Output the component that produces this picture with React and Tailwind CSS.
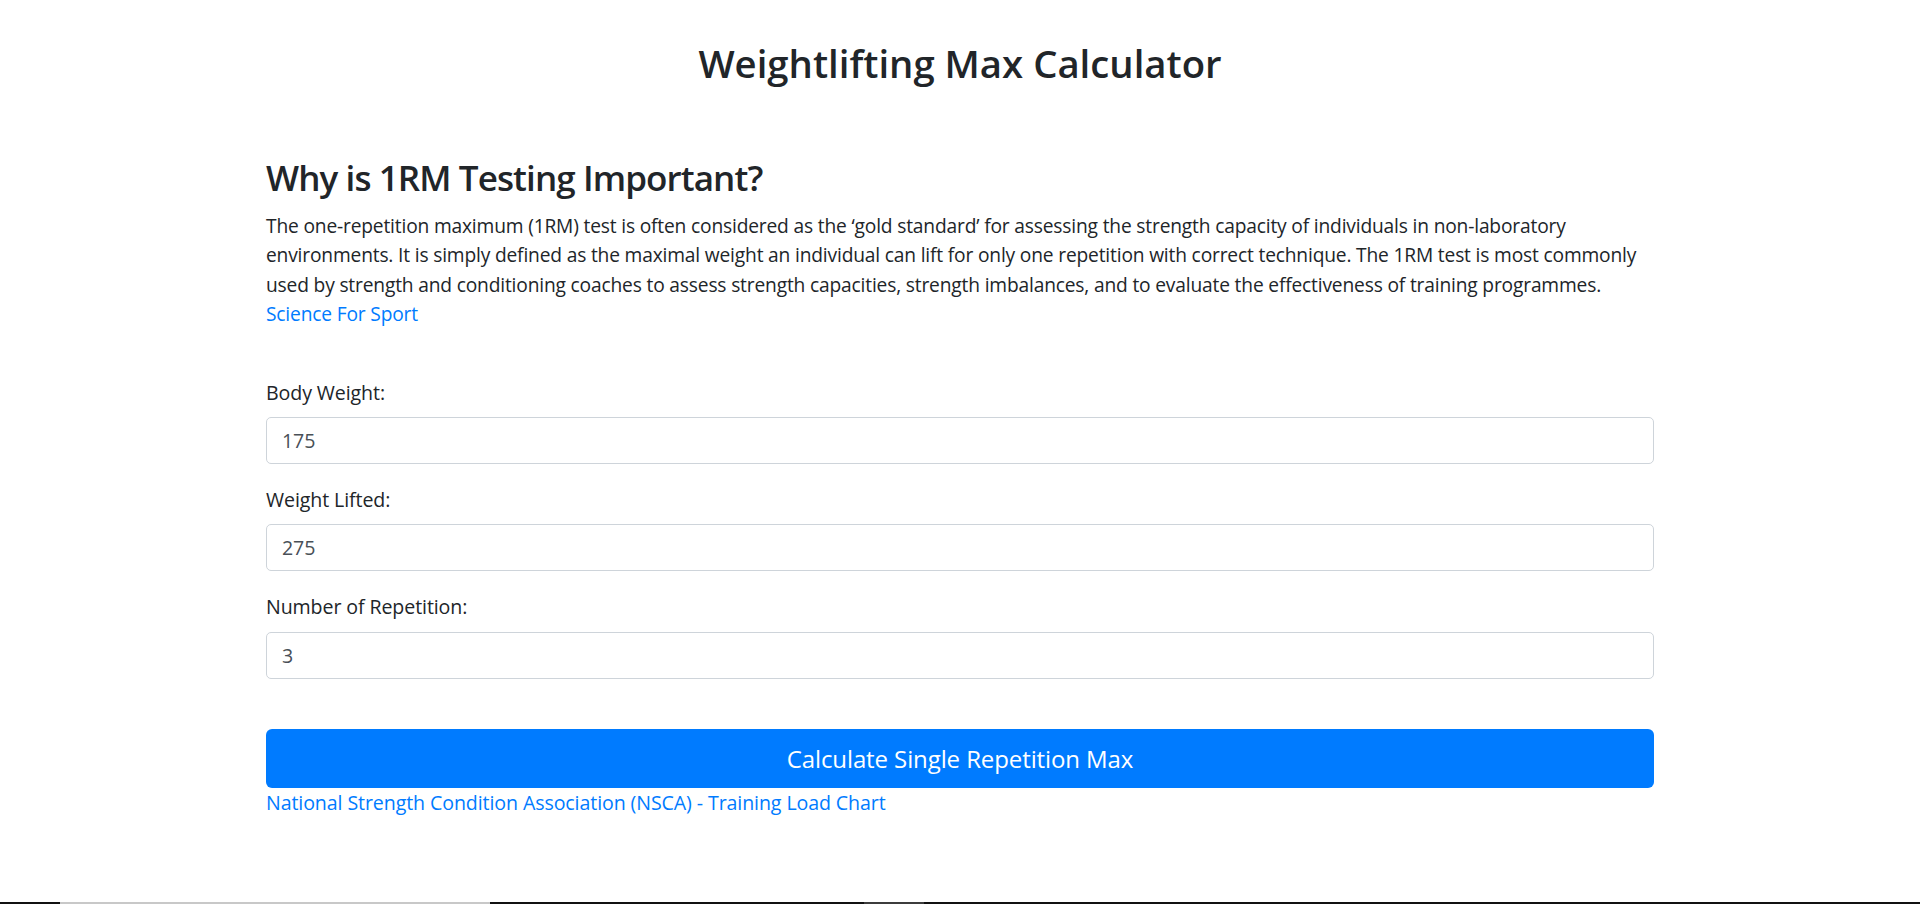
export default function App() {
  const font = { fontFamily: "'Open Sans', 'Noto Sans', sans-serif" };
  return (
    <div className="min-h-[904px] flex flex-col bg-white text-[#212529]" style={font}>
      <div className="flex-1 pt-[40px]">
        <h1 className="text-[38.3px] leading-[47px] font-semibold text-center">Weightlifting Max Calculator</h1>
        <div className="w-[1388px] mx-auto mt-[67px]">
          <h2 className="text-[35px] leading-[47px] font-semibold tracking-[-0.9px] mb-[10px]">Why is 1RM Testing Important?</h2>
          <div className="text-[19.6px] leading-[29.4px] tracking-[-0.1px]">
            <p className="text-[19.2px] tracking-[-0.17px]">
              The one-repetition maximum (1RM) test is often considered as the ‘gold standard’ for assessing the strength capacity of individuals in non-laboratory
              <br />
              environments. It is simply defined as the maximal weight an individual can lift for only one repetition with correct technique. The 1RM test is most commonly
              <br />
              used by strength and conditioning coaches to assess strength capacities, strength imbalances, and to evaluate the effectiveness of training programmes.
              <a href="#" className="block text-[#007bff]">Science For Sport</a>
            </p>
            <form className="mt-[49px]" onSubmit={(e) => e.preventDefault()}>
              {[
                ["Body Weight:", "175"],
                ["Weight Lifted:", "275"],
                ["Number of Repetition:", "3"],
              ].map(([label, val]) => (
                <div key={label} className="mb-[21px] last:mb-0">
                  <label className="block mb-[10px]">{label}</label>
                  <input
                    type="text"
                    defaultValue={val}
                    className="block w-full h-[47px] px-[15px] border border-[#ced4da] rounded-[5px] text-[#495057] outline-none"
                  />
                </div>
              ))}
              <button
                type="submit"
                className="mt-[50px] block w-full h-[59px] bg-[#007bff] text-white text-[24px] rounded-[6px]"
              >
                Calculate Single Repetition Max
              </button>
              <a href="#" className="block text-[#007bff]">National Strength Condition Association (NSCA) - Training Load Chart</a>
            </form>
          </div>
        </div>
      </div>
      <div className="h-[2px] flex bg-[#111111]">
        <div className="w-[60px]" />
        <div className="w-[430px] bg-[#c8c8c8]" />
        <div className="w-[374px]" />
        <div className="w-[60px] bg-[#3c3c3c]" />
      </div>
    </div>
  );
}
